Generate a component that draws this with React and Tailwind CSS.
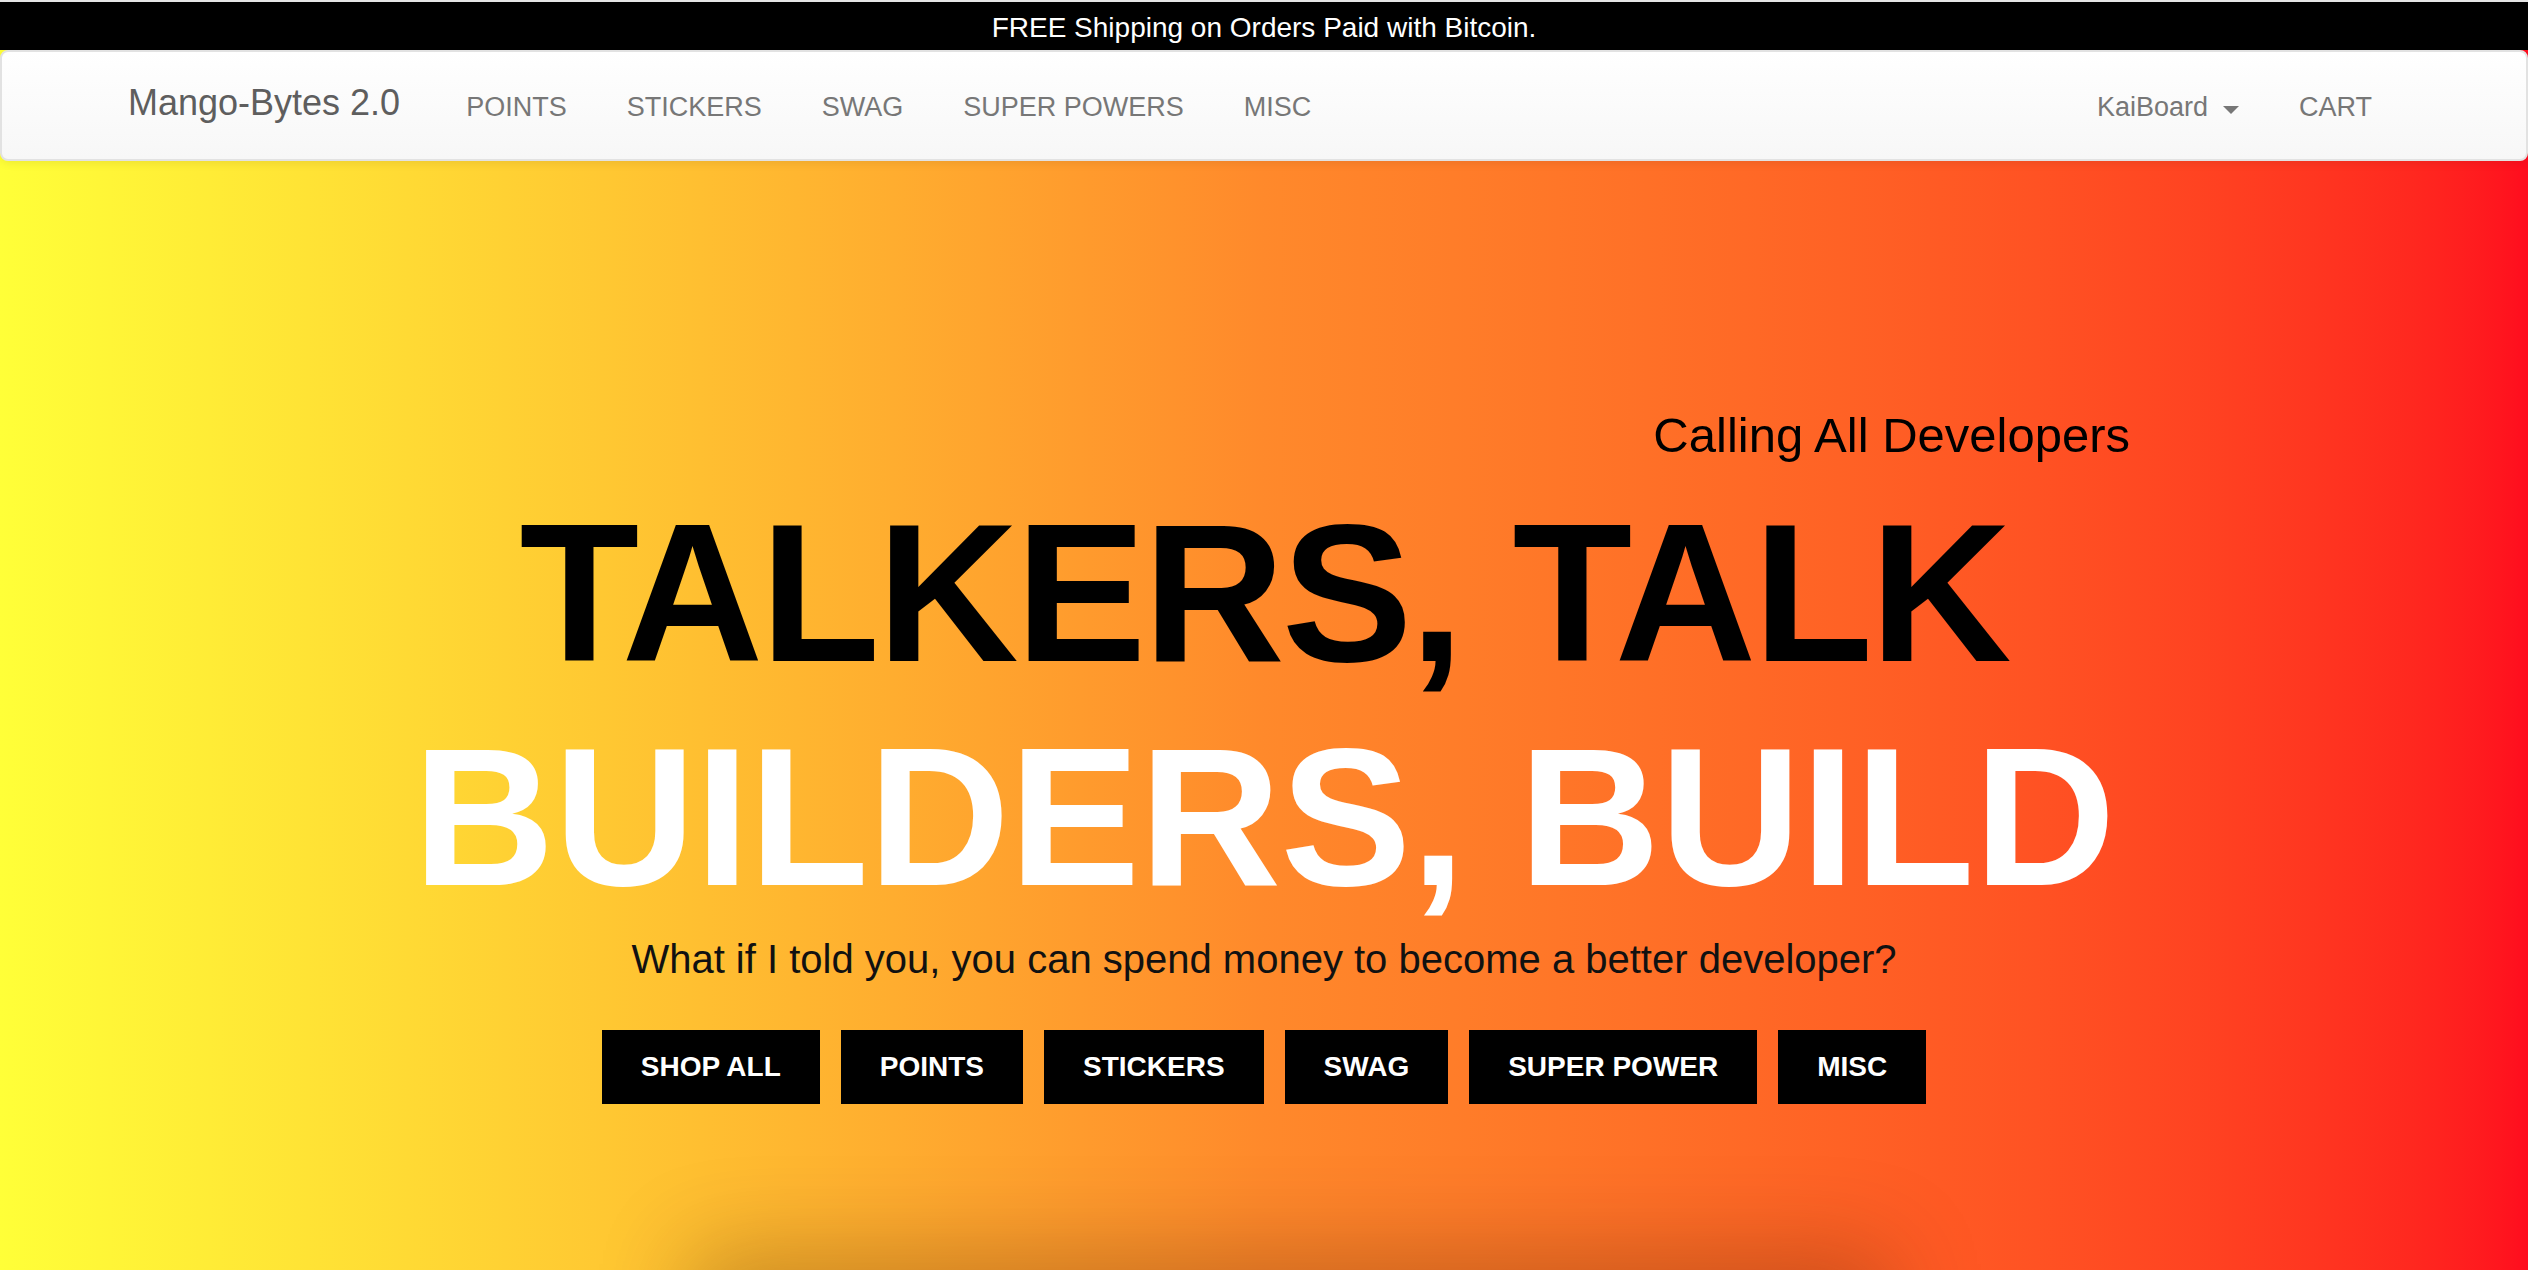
import React from 'react';

const NAV_LINKS = ['POINTS', 'STICKERS', 'SWAG', 'SUPER POWERS', 'MISC'];
const BUTTONS = ['SHOP ALL', 'POINTS', 'STICKERS', 'SWAG', 'SUPER POWER', 'MISC'];

function TopBar() {
  return (
    <div className="flex h-[50px] items-center justify-center border-t-2 border-[#e4e4e4] bg-black text-[28px] leading-none text-white">
      <span className="pt-[3px]">FREE Shipping on Orders Paid with Bitcoin.</span>
    </div>
  );
}

function NavBar() {
  return (
    <nav className="relative z-10 h-[111px] rounded-[8px] border-2 border-[#e2e2e2] bg-gradient-to-b from-white to-[#f7f7f7] shadow-[0_2px_10px_rgba(0,0,0,0.08)]">
      <div className="flex h-full items-center px-[124px] pt-[4px]">
        <span className="ml-[2px] mr-[36px] mb-[10px] text-[36px] leading-none text-[#5e5e5e]">Mango-Bytes 2.0</span>
        {NAV_LINKS.map((l) => (
          <a key={l} className="px-[30px] text-[27px] leading-none text-[#777]">{l}</a>
        ))}
        <div className="ml-auto flex items-center">
          <a className="flex items-center px-[30px] text-[27px] leading-none text-[#777]">
            KaiBoard
            <span className="ml-[15px] mt-[4px] inline-block h-0 w-0 border-x-[8px] border-t-[8px] border-x-transparent border-t-[#777]" />
          </a>
          <a className="px-[30px] text-[27px] leading-none text-[#777]">CART</a>
        </div>
      </div>
    </nav>
  );
}

function Hero() {
  return (
    <section className="relative h-[1109px] overflow-hidden bg-gradient-to-r from-[#ffff38] via-[#ff892b] to-[#ff0c1e] pt-[250px]">
      {/* headline group */}
      <div className="pr-[398px] text-right text-[49px] leading-[49px] text-black">Calling All Developers</div>
      <h1 className="mt-[22px] text-center text-[196px] font-bold leading-[224px]">
        <span className="block tracking-[-3px] text-black">TALKERS, TALK</span>
        <span className="block tracking-[-0.5px] text-white">BUILDERS, BUILD</span>
      </h1>
      <p className="mt-[5px] text-center text-[40px] leading-[48px] text-[#111]">
        What if I told you, you can spend money to become a better developer?
      </p>
      <div className="mt-[47px] flex justify-center gap-[21px]">
        {BUTTONS.map((b) => (
          <a key={b} className="flex h-[74px] items-center bg-black px-[39px] text-[28px] font-bold leading-none text-white">{b}</a>
        ))}
      </div>

      {/* shadow of the next section peeking up from below */}
      <div className="absolute left-[700px] top-full h-[200px] w-[1180px] shadow-[0_-10px_90px_10px_rgba(70,25,0,0.28)]" />
    </section>
  );
}

export default function App() {
  return (
    <div className="h-[1270px] overflow-hidden bg-gradient-to-r from-[#ffff38] via-[#ff892b] to-[#ff0c1e]" style={{ fontFamily: "'Liberation Sans', Arial, sans-serif" }}>
      <TopBar />
      <NavBar />
      <Hero />
    </div>
  );
}
